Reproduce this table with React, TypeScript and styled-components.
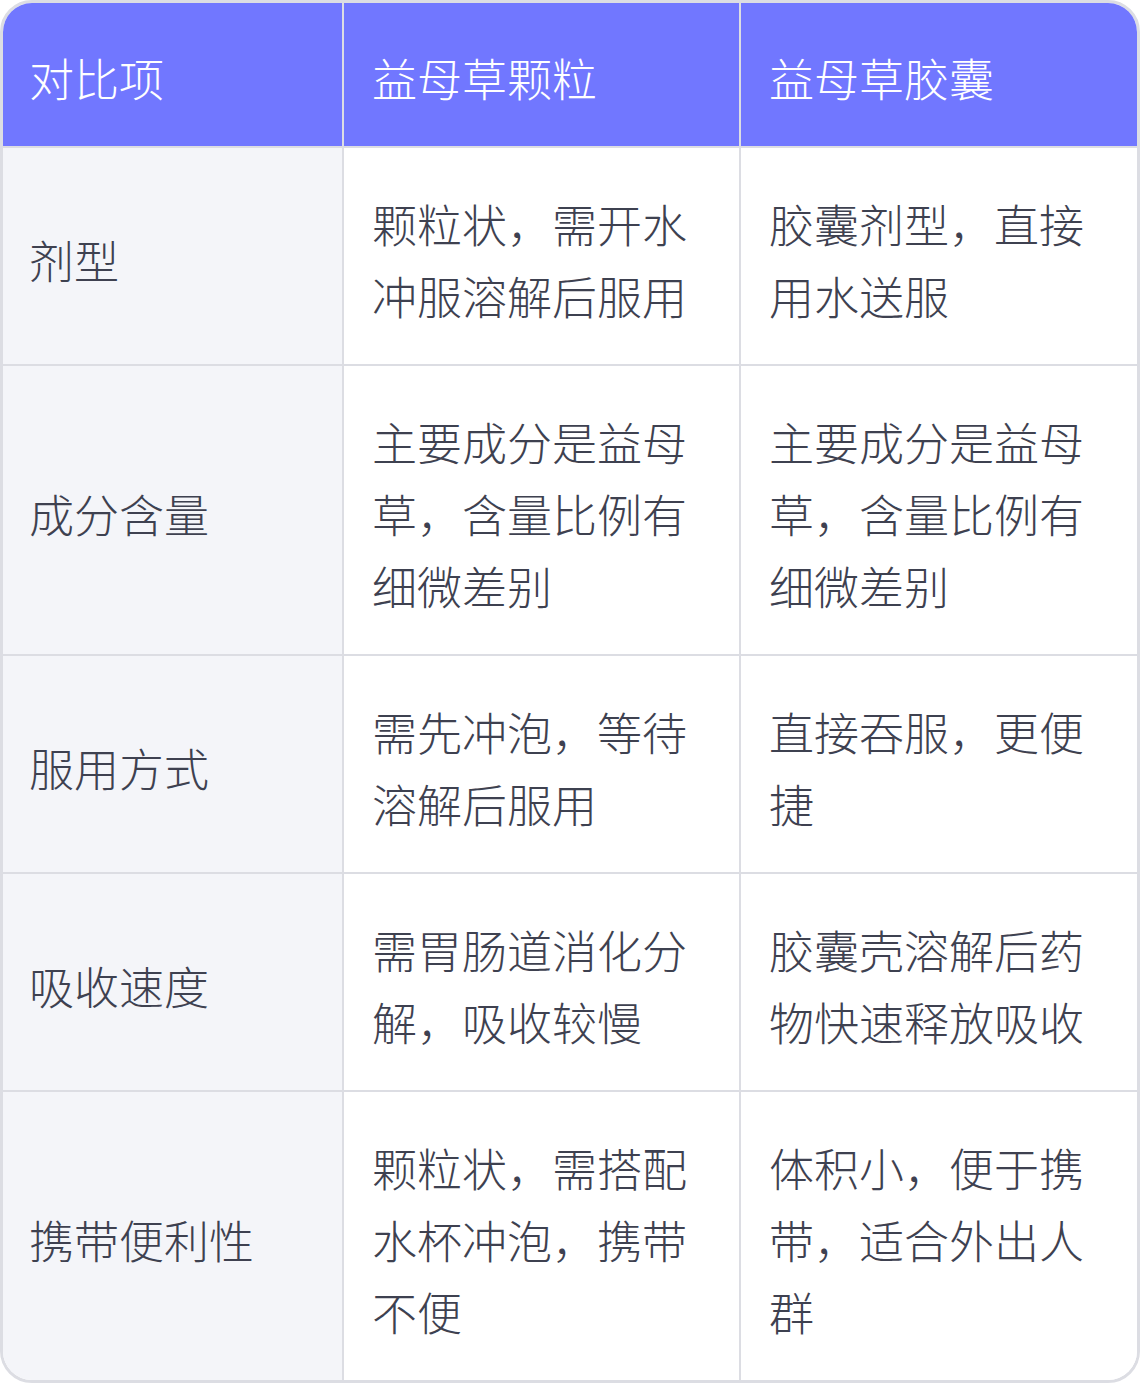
import styled, { createGlobalStyle } from 'styled-components';

const GlobalStyle = createGlobalStyle`
  html, body {
    margin: 0;
    padding: 0;
    background: #ffffff;
  }
  * {
    box-sizing: border-box;
  }
`;

const Card = styled.div`
  width: 1140px;
  border: 3px solid #dcdde3;
  border-radius: 32px;
  overflow: hidden;
  font-family: 'Noto Sans CJK SC', 'Noto Sans', sans-serif;
`;

const Table = styled.table`
  width: 100%;
  border-collapse: collapse;
  table-layout: fixed;
`;

const HeadCell = styled.th<{ $width: number }>`
  width: ${({ $width }) => $width}px;
  background: #7177ff;
  color: #ffffff;
  font-size: 45px;
  font-weight: 300;
  line-height: 72px;
  text-align: left;
  padding: 39px 28px 32px;
  border-left: 2px solid #dcdde3;
  border-bottom: 2px solid #dcdde3;

  &:first-child {
    border-left: none;
    padding-left: 26px;
  }
`;

const Cell = styled.td<{ $label?: boolean }>`
  background: ${({ $label }) => ($label ? '#f4f5f9' : '#ffffff')};
  color: #3e4150;
  font-size: 45px;
  font-weight: 300;
  line-height: 72px;
  padding: 40px 28px 32px;
  vertical-align: middle;
  border-left: 2px solid #dcdde3;
  border-top: 2px solid #dcdde3;
  word-break: break-all;

  &:first-child {
    border-left: none;
    padding-left: 26px;
  }
`;

const Row = styled.tr`
  &:first-child ${Cell} {
    border-top: none;
  }
`;

interface Compare {
  label: string;
  granule: string;
  capsule: string;
}

const rows: Compare[] = [
  { label: '剂型', granule: '颗粒状，需开水冲服溶解后服用', capsule: '胶囊剂型，直接用水送服' },
  { label: '成分含量', granule: '主要成分是益母草，含量比例有细微差别', capsule: '主要成分是益母草，含量比例有细微差别' },
  { label: '服用方式', granule: '需先冲泡，等待溶解后服用', capsule: '直接吞服，更便捷' },
  { label: '吸收速度', granule: '需胃肠道消化分解，吸收较慢', capsule: '胶囊壳溶解后药物快速释放吸收' },
  { label: '携带便利性', granule: '颗粒状，需搭配水杯冲泡，携带不便', capsule: '体积小，便于携带，适合外出人群' },
];

export default function App() {
  return (
    <>
      <GlobalStyle />
      <Card>
        <Table>
          <thead>
            <tr>
              <HeadCell $width={340}>对比项</HeadCell>
              <HeadCell $width={397}>益母草颗粒</HeadCell>
              <HeadCell $width={397}>益母草胶囊</HeadCell>
            </tr>
          </thead>
          <tbody>
            {rows.map((row) => (
              <Row key={row.label}>
                <Cell $label>{row.label}</Cell>
                <Cell>{row.granule}</Cell>
                <Cell>{row.capsule}</Cell>
              </Row>
            ))}
          </tbody>
        </Table>
      </Card>
    </>
  );
}
